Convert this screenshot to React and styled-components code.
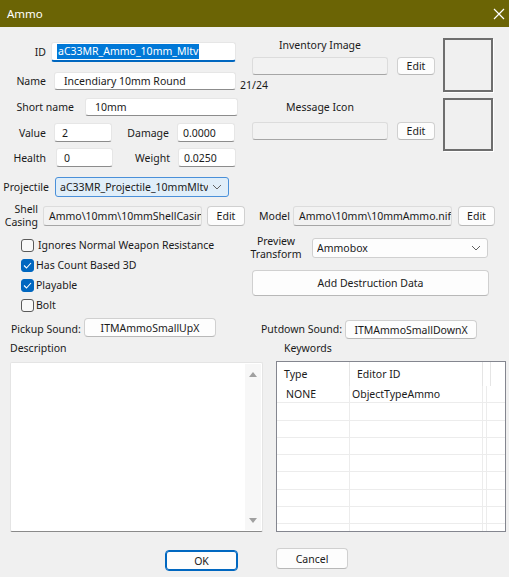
import React from 'react'
import styled, { createGlobalStyle } from 'styled-components'

const GlobalStyle = createGlobalStyle`
  body {
    margin: 0;
    background: #f0f0f0;
    font-family: "Noto Sans", "Open Sans", sans-serif;
    font-size: 10.5px;
    color: #000;
  }
  * { box-sizing: border-box; }
`

const keywordRows = [
  { type: 'NONE', id: 'ObjectTypeAmmo' },
  {}, {}, {}, {}, {}, {}, {}, {},
]

const checks = [
  { label: 'Ignores Normal Weapon Resistance', on: false, gap: 4 },
  { label: 'Has Count Based 3D', on: true, gap: 2 },
  { label: 'Playable', on: true, gap: 2 },
  { label: 'Bolt', on: false, gap: 2 },
]

const Chevron = () => (
  <svg width="10" height="6" viewBox="0 0 10 6">
    <path d="M1 1 L5 5 L9 1" fill="none" stroke="#606060" strokeWidth="1" />
  </svg>
)

const Tick = () => (
  <svg width="9" height="7" viewBox="0 0 9 7">
    <path d="M1 3.5 L3.5 6 L8 1" fill="none" stroke="#fff" strokeWidth="1.1" />
  </svg>
)

const App = () => {
  return (
    <Window>
      <GlobalStyle />
      <TitleBar>
        <span>Ammo</span>
        <svg width="12" height="12" viewBox="0 0 12 12">
          <path d="M1 1 L11 11 M11 1 L1 11" stroke="#fff" strokeWidth="1.2" />
        </svg>
      </TitleBar>

      <TopSection>
        <LeftCol>
          <Row $mt={15} $h={20}>
            <Label $w={46}>ID</Label>
            <Field $ml={5} $w={185} $focus>
              <Selected>aC33MR_Ammo_10mm_Mltv</Selected>
            </Field>
          </Row>
          <Row $mt={10} $h={18}>
            <Label $w={46}>Name</Label>
            <Field $ml={8} $w={182}>Incendiary 10mm Round</Field>
            <Counter>21/24</Counter>
          </Row>
          <Row $mt={8} $h={18}>
            <Label $w={74}>Short name</Label>
            <Field $ml={11} $w={153}>10mm</Field>
          </Row>
          <Row $mt={7} $h={19}>
            <Label $w={46}>Value</Label>
            <Field $ml={8} $w={58} $pad={7}>2</Field>
            <Label $w={57}>Damage</Label>
            <Field $ml={8} $w={58} $pad={5}>0.0000</Field>
          </Row>
          <Row $mt={6} $h={19}>
            <Label $w={46}>Health</Label>
            <Field $ml={10} $w={57} $pad={7}>0</Field>
            <Label $w={57}>Weight</Label>
            <Field $ml={8} $w={58} $pad={5}>0.0250</Field>
          </Row>
          <Row $mt={10} $h={20}>
            <Label $w={49}>Projectile</Label>
            <Combo $ml={6} $w={174} $hot>
              <ComboText>aC33MR_Projectile_10mmMltv</ComboText>
              <Chevron />
            </Combo>
          </Row>
        </LeftCol>

        <RightCol>
          <IconGroup $mt={11}>
            <IconStack>
              <GroupLabel $h={19}>Inventory Image</GroupLabel>
              <Row $h={18}>
                <Field $w={136} $disabled />
                <Button $ml={9} $w={38}>Edit</Button>
              </Row>
            </IconStack>
            <ImageBox $h={54} />
          </IconGroup>
          <IconGroup $mt={6}>
            <IconStack $pt={2}>
              <GroupLabel $h={22}>Message Icon</GroupLabel>
              <Row $h={18}>
                <Field $w={136} $disabled />
                <Button $ml={9} $w={38}>Edit</Button>
              </Row>
            </IconStack>
            <ImageBox $h={53} />
          </IconGroup>
        </RightCol>
      </TopSection>

      <Row $mt={9} $h={20}>
        <Label $w={38} $two>Shell<br />Casing</Label>
        <Field $ml={5} $w={159} $disabled $pad={5}>Ammo\10mm\10mmShellCasing.nif</Field>
        <Button $ml={5} $w={38}>Edit</Button>
        <Label $ml={14} $w={29}>Model</Label>
        <Field $ml={5} $w={159} $disabled $pad={5}>Ammo\10mm\10mmAmmo.nif</Field>
        <Button $ml={6} $w={37}>Edit</Button>
      </Row>

      <MiddleSection>
        <CheckList>
          {checks.map((c) => (
            <CheckRow key={c.label}>
              <CheckBox $on={c.on}>{c.on && <Tick />}</CheckBox>
              <CheckText $gap={c.gap}>{c.label}</CheckText>
            </CheckRow>
          ))}
        </CheckList>
        <PreviewCol>
          <Row $mt={12} $h={20}>
            <Label $w={52} $two $center>Preview<br />Transform</Label>
            <Combo $ml={10} $w={176}>
              <ComboText>Ammobox</ComboText>
              <Chevron />
            </Combo>
          </Row>
          <Row $mt={12} $h={26}>
            <Button $ml={2} $w={237} $h={26}>Add Destruction Data</Button>
          </Row>
        </PreviewCol>
      </MiddleSection>

      <SoundRow>
        <SoundLabel $ml={11} $w={66}>Pickup Sound:</SoundLabel>
        <Button $ml={7} $w={132} $h={19}>ITMAmmoSmallUpX</Button>
        <SoundLabel $ml={45} $w={76}>Putdown Sound:</SoundLabel>
        <Button $ml={8} $w={132} $h={19} $low>ITMAmmoSmallDownX</Button>
      </SoundRow>

      <BottomSection>
        <Panel $ml={10} $w={253}>
          <PanelLabel>Description</PanelLabel>
          <TextArea>
            <ScrollBar>
              <Arrow />
              <Arrow $down />
            </ScrollBar>
          </TextArea>
        </Panel>
        <Panel $ml={13} $w={230}>
          <PanelLabel $ml={8}>Keywords</PanelLabel>
          <ListView>
            <ListGrid>
              <HeadCell>Type</HeadCell>
              <HeadCell>Editor ID</HeadCell>
              <HeadCell />
              <HeadCell $last />
              {keywordRows.map((r, i) => (
                <React.Fragment key={i}>
                  <Cell $pl={9}>{r.type}</Cell>
                  <Cell>{r.id}</Cell>
                  <Cell />
                  <Cell $last />
                </React.Fragment>
              ))}
            </ListGrid>
          </ListView>
        </Panel>
      </BottomSection>

      <ButtonRow>
        <Button $ml={165} $w={73} $h={21} $mt={2} $default>OK</Button>
        <Button $ml={38} $w={72} $h={21}>Cancel</Button>
      </ButtonRow>
    </Window>
  )
}

const Window = styled.div`
  width: 509px;
  height: 577px;
  background: #f0f0f0;
  overflow: hidden;
`

const TitleBar = styled.div`
  height: 27px;
  background: #6b6405;
  color: #fff;
  font-size: 11.5px;
  display: flex;
  align-items: center;
  justify-content: space-between;
  padding: 0 4px 0 7px;
`

const TopSection = styled.div`
  display: flex;
  align-items: flex-start;
`

const LeftCol = styled.div`
  width: 252px;
  flex-shrink: 0;
  display: flex;
  flex-direction: column;
`

const RightCol = styled.div`
  display: flex;
  flex-direction: column;
`

const Row = styled.div`
  display: flex;
  align-items: center;
  height: ${(p) => p.$h}px;
  margin-top: ${(p) => p.$mt || 0}px;
  flex-shrink: 0;
`

const Label = styled.div`
  flex-shrink: 0;
  width: ${(p) => (p.$w ? `${p.$w}px` : 'auto')};
  margin-left: ${(p) => p.$ml || 0}px;
  text-align: ${(p) => (p.$center ? 'center' : 'right')};
  white-space: nowrap;
  line-height: ${(p) => (p.$two ? '13px' : '16px')};
  color: #1a1a1a;
`

const SoundLabel = styled.div`
  flex-shrink: 0;
  width: ${(p) => p.$w}px;
  margin-left: ${(p) => p.$ml}px;
  align-self: center;
  white-space: nowrap;
  color: #1a1a1a;
`

const Field = styled.div`
  flex-shrink: 0;
  width: ${(p) => p.$w}px;
  height: 100%;
  margin-left: ${(p) => p.$ml || 0}px;
  background: ${(p) => (p.$disabled ? '#f2f2f2' : '#fff')};
  border: 1px solid ${(p) => (p.$disabled ? '#dcdcdc' : '#e6e6e6')};
  border-bottom: ${(p) =>
    p.$focus ? '2px solid #0067c0' : `1px solid ${p.$disabled ? '#a6a6a6' : '#8c8c8c'}`};
  border-radius: 3px;
  padding: 0 ${(p) => (p.$focus ? 5 : p.$pad || 9)}px;
  display: flex;
  align-items: center;
  white-space: nowrap;
  overflow: hidden;
  color: #1a1a1a;
`

const Selected = styled.span`
  background: #0078d7;
  color: #fff;
  line-height: 15px;
  padding: 0 1px;
`

const Counter = styled.span`
  margin-left: 4px;
  padding-top: 7px;
  white-space: nowrap;
  color: #1a1a1a;
`

const Combo = styled.div`
  flex-shrink: 0;
  width: ${(p) => p.$w}px;
  height: 100%;
  margin-left: ${(p) => p.$ml || 0}px;
  background: ${(p) => (p.$hot ? '#e0eef9' : '#fdfdfd')};
  border: 1px solid ${(p) => (p.$hot ? '#4a90d9' : '#d0d0d0')};
  border-radius: 3px;
  display: flex;
  align-items: center;
  justify-content: space-between;
  gap: 4px;
  padding: 0 6px 0 4px;
  color: #1a1a1a;
`

const ComboText = styled.span`
  white-space: nowrap;
  overflow: hidden;
`

const Button = styled.div`
  flex-shrink: 0;
  width: ${(p) => p.$w}px;
  height: ${(p) => (p.$h ? `${p.$h}px` : '100%')};
  margin-left: ${(p) => p.$ml || 0}px;
  margin-top: ${(p) => p.$mt || 0}px;
  align-self: ${(p) => (p.$low ? 'flex-end' : 'auto')};
  background: #fdfdfd;
  border: 1px solid ${(p) => (p.$default ? '#0067c0' : '#d0d0d0')};
  border-bottom-color: ${(p) => (p.$default ? '#0067c0' : '#b8b8b8')};
  box-shadow: ${(p) => (p.$default ? 'inset 0 0 0 1px #0067c0' : 'none')};
  border-radius: 4px;
  display: flex;
  align-items: center;
  justify-content: center;
  white-space: nowrap;
  overflow: hidden;
  color: #1a1a1a;
`

const IconGroup = styled.div`
  display: flex;
  margin-top: ${(p) => p.$mt}px;
`

const IconStack = styled.div`
  width: 183px;
  padding-top: ${(p) => p.$pt || 0}px;
  display: flex;
  flex-direction: column;
`

const GroupLabel = styled.div`
  width: 136px;
  height: ${(p) => p.$h}px;
  text-align: center;
  line-height: 14px;
  color: #1a1a1a;
`

const ImageBox = styled.div`
  width: 50px;
  height: ${(p) => p.$h}px;
  margin-left: 8px;
  border: 2px solid #6e6e6e;
  box-shadow: 1px 1px 0 #fff;
`

const MiddleSection = styled.div`
  display: flex;
  align-items: flex-start;
  height: 89px;
`

const CheckList = styled.div`
  width: 250px;
  padding-top: 9px;
  display: flex;
  flex-direction: column;
`

const CheckRow = styled.div`
  display: flex;
  align-items: center;
  height: 20px;
  padding-left: 21px;
`

const CheckBox = styled.div`
  width: 13px;
  height: 13px;
  border-radius: 3px;
  border: 1px solid ${(p) => (p.$on ? '#0067c0' : '#5a5a5a')};
  background: ${(p) => (p.$on ? '#0067c0' : '#f8f8f8')};
  display: flex;
  align-items: center;
  justify-content: center;
`

const CheckText = styled.span`
  margin-left: ${(p) => p.$gap}px;
  color: #1a1a1a;
`

const PreviewCol = styled.div`
  display: flex;
  flex-direction: column;
`

const SoundRow = styled.div`
  display: flex;
  align-items: flex-start;
  height: 21px;
  margin-top: 3px;
`

const BottomSection = styled.div`
  display: flex;
  margin-top: 2px;
`

const Panel = styled.div`
  width: ${(p) => p.$w}px;
  margin-left: ${(p) => p.$ml}px;
  display: flex;
  flex-direction: column;
`

const PanelLabel = styled.div`
  height: 14px;
  line-height: 14px;
  margin-left: ${(p) => p.$ml || 0}px;
  color: #1a1a1a;
`

const TextArea = styled.div`
  margin-top: 7px;
  height: 170px;
  background: #fff;
  border: 1px solid #e4e4e4;
  border-bottom: 1px solid #8a8a8a;
  border-radius: 2px;
  display: flex;
  justify-content: flex-end;
  padding: 1px;
`

const ScrollBar = styled.div`
  width: 16px;
  background: #f7f7f7;
  display: flex;
  flex-direction: column;
  justify-content: space-between;
  align-items: center;
  padding: 8px 0 7px;
`

const Arrow = styled.div`
  width: 0;
  height: 0;
  border-left: 4px solid transparent;
  border-right: 4px solid transparent;
  ${(p) => (p.$down ? 'border-top: 5px solid #a0a0a0;' : 'border-bottom: 5px solid #a0a0a0;')}
`

const ListView = styled.div`
  margin-top: 6px;
  height: 171px;
  background: #fff;
  border: 1px solid #84868f;
  overflow: hidden;
`

const ListGrid = styled.div`
  display: grid;
  grid-template-columns: 73px 133px 4px 1fr;
  grid-auto-rows: 17.3px;
  grid-template-rows: 24px;
`

const HeadCell = styled.div`
  border-right: ${(p) => (p.$last ? 'none' : '1px solid #e5e5e5')};
  padding-left: 7px;
  display: flex;
  align-items: center;
  white-space: nowrap;
  color: #1a1a1a;
`

const Cell = styled.div`
  border-right: ${(p) => (p.$last ? 'none' : '1px solid #ececec')};
  border-bottom: 1px solid #ececec;
  padding-left: ${(p) => p.$pl || 2}px;
  display: flex;
  align-items: center;
  white-space: nowrap;
  color: #1a1a1a;
`

const ButtonRow = styled.div`
  display: flex;
  align-items: flex-start;
  margin-top: 16px;
`

export default App
